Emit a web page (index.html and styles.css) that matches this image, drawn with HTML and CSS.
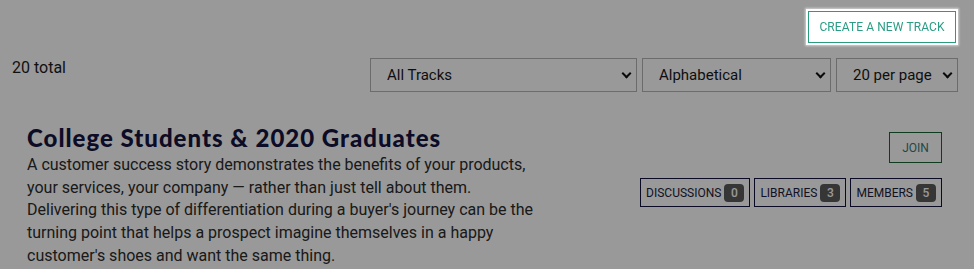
FILE: index.html
```html
<!DOCTYPE html>
<html lang="en">
<head>
<meta charset="utf-8">
<title>Tracks</title>
<link rel="stylesheet" href="styles.css">
</head>
<body>
<div class="page">
  <div class="top-actions">
    <button class="create-btn" type="button">Create a new track</button>
  </div>

  <div class="toolbar">
    <div class="total">20 total</div>
    <div class="filters">
      <div class="select-wrap w-tracks">
        <select class="select"><option>All Tracks</option></select>
      </div>
      <div class="select-wrap w-sort">
        <select class="select"><option>Alphabetical</option></select>
      </div>
      <div class="select-wrap w-per">
        <select class="select"><option>20 per page</option></select>
      </div>
    </div>
  </div>

  <div class="card">
    <div class="card-main">
      <h2 class="card-title">College Students &amp; 2020 Graduates</h2>
      <p class="card-desc">A customer success story demonstrates the benefits of your products, your services, your company — rather than just tell about them. Delivering this type of differentiation during a buyer's journey can be the turning point that helps a prospect imagine themselves in a happy customer's shoes and want the same thing.</p>
    </div>
    <div class="card-side">
      <button class="join-btn" type="button">Join</button>
      <div class="tags">
        <span class="tag">Discussions <span class="badge">0</span></span>
        <span class="tag">Libraries <span class="badge">3</span></span>
        <span class="tag">Members <span class="badge">5</span></span>
      </div>
    </div>
  </div>
</div>
<div class="backdrop"></div>
</body>
</html>
```

FILE: styles.css
```css
* { box-sizing: border-box; }

html, body {
  margin: 0;
  padding: 0;
  background: #fff;
  font-family: Roboto, "Liberation Sans", Arial, sans-serif;
  color: #2e2e2e;
  overflow: hidden;
}

.page {
  width: 974px;
  height: 269px;
}

.top-actions {
  display: flex;
  justify-content: flex-end;
  padding: 11px 18px 0 0;
}

.create-btn {
  position: relative;
  z-index: 10;
  width: 148px;
  height: 32px;
  padding: 0;
  border: 1px solid #2a9c7e;
  background: #fff;
  color: #2a9d84;
  font-family: Roboto, "Liberation Sans", Arial, sans-serif;
  font-size: 12px;
  text-transform: uppercase;
  letter-spacing: 0.1px;
  box-shadow: 0 0 0 2px #fff, 0 0 2px 3px rgba(255, 255, 255, 0.55);
  cursor: pointer;
}

.toolbar {
  display: flex;
  justify-content: space-between;
  align-items: flex-start;
  margin-top: 15px;
  padding: 0 16px 0 12px;
}

.total {
  font-size: 16px;
  line-height: 20px;
  color: #1c1c1c;
}

.filters {
  display: flex;
  gap: 5px;
}

.select-wrap {
  position: relative;
  height: 34px;
}

.select-wrap::after {
  content: "";
  position: absolute;
  right: 7px;
  top: 12px;
  width: 5px;
  height: 5px;
  border-right: 2.5px solid #111;
  border-bottom: 2.5px solid #111;
  transform: rotate(45deg);
  pointer-events: none;
}

.w-tracks { width: 267px; }
.w-sort { width: 189px; }
.w-per { width: 122px; }

.select {
  appearance: none;
  -webkit-appearance: none;
  width: 100%;
  height: 100%;
  margin: 0;
  padding: 0 22px 0 16px;
  border: 1px solid #b4b4b4;
  border-radius: 0;
  background: #fff;
  color: #181818;
  font-family: Roboto, "Liberation Sans", Arial, sans-serif;
  font-size: 15px;
}

.card {
  display: flex;
  justify-content: space-between;
  align-items: flex-start;
  margin: 32px 32px 0 27px;
}

.card-main {
  width: 512px;
}

.card-title {
  margin: 0;
  font-family: Lato, "Open Sans", sans-serif;
  font-weight: 900;
  font-size: 24px;
  line-height: 28px;
  letter-spacing: 1px;
  white-space: nowrap;
  color: #141440;
}

.card-desc {
  margin: 2px 0 0;
  font-size: 16px;
  line-height: 22.7px;
  color: #2c2c2c;
}

.card-side {
  display: flex;
  flex-direction: column;
  align-items: flex-end;
  padding-top: 8px;
}

.join-btn {
  width: 53px;
  height: 31px;
  padding: 0;
  border: 1px solid #1a6432;
  background: #fff;
  color: #3a7a76;
  font-family: Roboto, "Liberation Sans", Arial, sans-serif;
  font-size: 12px;
  text-transform: uppercase;
  cursor: pointer;
}

.tags {
  display: flex;
  gap: 4px;
  margin-top: 15px;
}

.tag {
  display: inline-flex;
  align-items: center;
  gap: 3px;
  height: 29px;
  padding: 0 5px 0 5px;
  border: 1px solid #12123f;
  background: #fff;
  color: #1d1d40;
  font-size: 12px;
  text-transform: uppercase;
}

.badge {
  display: inline-flex;
  align-items: center;
  justify-content: center;
  min-width: 20px;
  height: 18px;
  padding: 0 5px;
  border-radius: 4px;
  background: #5a5a5a;
  color: #fff;
  font-size: 12px;
  font-weight: 500;
}

.backdrop {
  position: fixed;
  inset: 0;
  z-index: 5;
  background: rgba(0, 0, 0, 0.4);
}
```
